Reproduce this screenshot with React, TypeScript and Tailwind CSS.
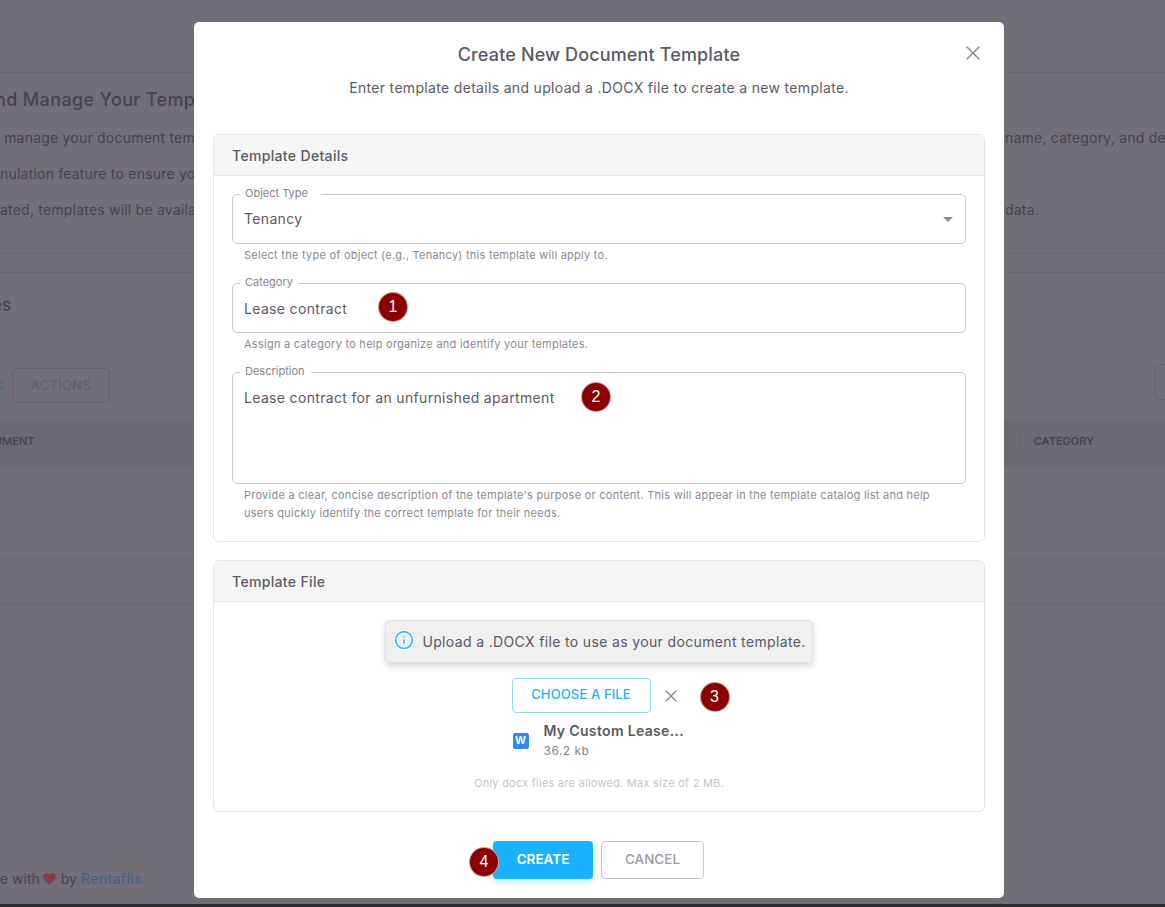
import React from "react";
import { Info, X } from "lucide-react";

const StepBadge = ({ n, className = "" }: { n: number; className?: string }) => (
  <div
    className={`flex h-[30px] w-[30px] items-center justify-center rounded-full border border-white/60 bg-[#8b0000] font-['Liberation_Sans',sans-serif] text-[16px] text-white ${className}`}
  >
    {n}
  </div>
);

const Field = ({
  label,
  notch,
  value,
  help,
  heightClass,
  valueClass = "pt-[15px]",
  children,
}: {
  label: string;
  notch: string;
  value: string;
  help: React.ReactNode;
  heightClass: string;
  valueClass?: string;
  children?: React.ReactNode;
}) => (
  <div>
    <div className={`relative rounded-[5px] border border-[#c8c8c8] px-[11px] ${heightClass}`}>
      <span className={`absolute -top-[9px] left-[7px] bg-white pl-[5px] text-[11px] leading-[14px] text-[#85858a] ${notch}`}>
        {label}
      </span>
      <div className={`text-[14px] leading-[20px] tracking-[0.024em] text-[#5a5a64] ${valueClass}`}>{value}</div>
      {children}
    </div>
    <p className="mt-[2px] px-[12px] text-[11px] leading-[18px] tracking-[0.023em] text-[#8a8a92]">{help}</p>
  </div>
);

const SectionCard = ({ title, children }: { title: string; children: React.ReactNode }) => (
  <section className="rounded-[6px] border border-[#e6e6e6] bg-white">
    <h3 className="flex h-[41px] items-center rounded-t-[6px] border-b border-[#e6e6e6] bg-[#f6f6f6] px-[18px] text-[14px] font-medium tracking-[0.024em] text-[#5a5a64]">
      {title}
    </h3>
    {children}
  </section>
);

const Background = () => (
  <div className="flex h-[907px] flex-col bg-[#716e78] text-[14px] text-[#47434f]">
    <div className="h-[73px] shrink-0 border-b border-[#67646e]" />
    <div className="-ml-[5px] h-[46px] shrink-0 overflow-hidden whitespace-nowrap pt-[15px] text-[18px] font-medium leading-[24px] tracking-[0.02em]">
      nd Manage Your Templates
    </div>
    <div className="flex h-[36px] shrink-0 items-center overflow-hidden whitespace-nowrap tracking-[0.015em]">
      <span className="w-[1005px] shrink-0">&nbsp;manage your document templates</span>
      <span>name, category, and description.</span>
    </div>
    <div className="flex h-[36px] shrink-0 items-center overflow-hidden whitespace-nowrap tracking-[0.015em]">
      nulation feature to ensure your templates
    </div>
    <div className="flex h-[36px] shrink-0 items-center overflow-hidden whitespace-nowrap tracking-[0.015em]">
      <span className="w-[1005px] shrink-0">ated, templates will be available</span>
      <span>data.</span>
    </div>
    <div className="mt-[26px] h-[20px] shrink-0 border-y border-[#696670]" />
    <div className="-ml-[8px] h-[94px] shrink-0 pt-[20px] text-[17px] font-medium leading-[24px] text-[#47434f]">es</div>
    <div className="flex h-[52px] shrink-0 items-start justify-between pt-[1px]">
      <div className="-ml-[3px] flex items-center gap-[8px]">
        <span className="text-[13px] text-[#3f6a8f]">s</span>
        <span className="flex h-[35px] w-[98px] items-center justify-center rounded-[5px] border border-[#64616b] text-[13px] font-medium tracking-[0.02em] text-[#625f69]">
          ACTIONS
        </span>
      </div>
      <span className="-mt-[4px] h-[36px] w-[10px] rounded-l-[5px] border border-r-0 border-[#64616b]" />
    </div>
    <div className="flex h-[48px] shrink-0 items-center justify-between bg-[#6c6973] pb-[3px] pr-[71px] text-[11px] font-semibold text-[#47434f]">
      <span className="-ml-[6px]">UMENT</span>
      <span className="flex items-center gap-[13px]">
        <span className="h-[15px] w-px bg-[#64616b]" />
        CATEGORY
      </span>
    </div>
    <div className="h-[92px] shrink-0 border-b border-[#67646e]" />
    <div className="h-[45px] shrink-0 border-b border-[#67646e]" />
    <div className="flex flex-1 items-end pb-[15px]">
      <span className="flex items-center">
        e with
        <svg className="ml-[3px] mr-[5px]" width="13" height="12" viewBox="0 0 24 22">
          <path d="M12 22C5 16 0 11.500 0 6.500 0 2.800 2.800 0 6.500 0 8.700 0 10.800 1 12 2.800 13.200 1 15.300 0 17.500 0 21.200 0 24 2.800 24 6.500 24 11.500 19 16 12 22z" fill="#823e4a" />
        </svg>
        by <span className="ml-[4px] tracking-[0.03em] text-[#3d6282]">Rentaflix</span>
      </span>
    </div>
    <div className="h-[3px] shrink-0 bg-[#2b2b2b]" />
  </div>
);

export default function App() {
  return (
    <div className="relative h-[907px] w-[1165px] overflow-hidden font-['Inter',sans-serif]">
      <Background />

      {/* Modal */}
      <div className="absolute inset-0 flex pl-[194px] pt-[22px]">
        <div className="relative flex h-[876px] w-[810px] flex-col rounded-[5px] bg-white px-[19px]">
          <button className="absolute right-[19px] top-[19px] text-[#85858c]">
            <X size={24} strokeWidth={1.4} />
          </button>
          <h2 className="pt-[21px] text-center text-[18px] font-medium leading-[24px] tracking-[0.008em] text-[#5a5a64]">
            Create New Document Template
          </h2>
          <p className="mt-[11px] text-center text-[14px] leading-[20px] tracking-[0.023em] text-[#5a5a64]">
            Enter template details and upload a .DOCX file to create a new template.
          </p>

          <div className="mt-[36px] flex flex-col gap-[18px]">
            <SectionCard title="Template Details">
              <div className="flex flex-col gap-[19px] px-[18px] pb-[19px] pt-[18px]">
                <Field
                  label="Object Type"
                  notch="pr-[13px]"
                  value="Tenancy"
                  heightClass="h-[50px]"
                  valueClass="pt-[14px]"
                  help="Select the type of object (e.g., Tenancy) this template will apply to."
                >
                  <svg className="absolute right-[12px] top-[22px]" width="10" height="5" viewBox="0 0 10 5">
                    <path d="M0 0h10L5 5z" fill="#8a8a90" />
                  </svg>
                </Field>
                <Field
                  label="Category"
                  notch="pr-[6px]"
                  value="Lease contract"
                  heightClass="h-[50px]"
                  help="Assign a category to help organize and identify your templates."
                >
                  <StepBadge n={1} className="absolute left-[145px] top-[8px]" />
                </Field>
                <Field
                  label="Description"
                  notch="pr-[6px]"
                  value="Lease contract for an unfurnished apartment"
                  heightClass="h-[112px]"
                  help={
                    <>
                      Provide a clear, concise description of the template's purpose or content. This will appear in the template catalog list and help
                      <br />
                      users quickly identify the correct template for their needs.
                    </>
                  }
                >
                  <StepBadge n={2} className="absolute left-[348px] top-[9px]" />
                </Field>
              </div>
            </SectionCard>

            <SectionCard title="Template File">
              <div className="flex h-[209px] flex-col items-center pt-[18px]">
                <div className="flex h-[43px] items-center gap-[8px] rounded-[5px] border border-[#e2e2e2] bg-[#f0f0f0] pl-[8px] pr-[6px] shadow-[0_3px_6px_rgba(0,0,0,0.16)]">
                  <Info size={20} strokeWidth={1.7} className="-mt-[4px] text-[#1ab2ff]" />
                  <span className="text-[14px] tracking-[0.025em] text-[#5a5a64]">
                    Upload a .DOCX file to use as your document template.
                  </span>
                </div>
                <div className="relative mt-[15px] flex w-[175px] items-center">
                  <button className="flex h-[35px] w-[139px] shrink-0 items-center justify-center rounded-[4px] border border-[#8cd8ff] pb-[1px] text-[13px] font-medium tracking-[0.01em] text-[#1ab2ff]">
                    CHOOSE A FILE
                  </button>
                  <X size={20} strokeWidth={1.4} className="ml-[10px] shrink-0 text-[#85858c]" />
                  <StepBadge n={3} className="absolute left-[188px] top-[4px]" />
                </div>
                <div className="mt-[8px] flex w-[173px] items-center">
                  <span className="flex h-[16px] w-[16px] shrink-0 items-center justify-center rounded-[2px] bg-[#2b8cf0] font-['Liberation_Sans',sans-serif] text-[11px] font-bold text-white">
                    W
                  </span>
                  <div className="ml-[15px] whitespace-nowrap">
                    <div className="text-[14px] font-semibold leading-[20px] tracking-[0.024em] text-[#5a5a64]">My Custom Lease...</div>
                    <div className="text-[12px] leading-[19px] tracking-[0.04em] text-[#85858c]">36.2 kb</div>
                  </div>
                </div>
                <p className="mt-[15px] text-[11px] tracking-[0.022em] text-[#c4c4c8]">
                  Only docx files are allowed. Max size of 2 MB.
                </p>
              </div>
            </SectionCard>
          </div>

          <div className="mt-[29px] flex justify-center gap-[8px] pr-[1px]">
            <div className="relative">
              <button className="h-[38px] w-[100px] rounded-[4px] bg-[#1ab2ff] pb-[1px] text-[13.500px] font-semibold text-white shadow-[0_3px_6px_rgba(26,178,255,0.3)]">
                CREATE
              </button>
              <StepBadge n={4} className="absolute -left-[24px] top-[6px]" />
            </div>
            <button className="h-[38px] w-[103px] rounded-[4px] border border-[#c8c8c8] pb-[1px] text-[13.500px] font-medium text-[#9a9aa0]">
              CANCEL
            </button>
          </div>
        </div>
      </div>
    </div>
  );
}
